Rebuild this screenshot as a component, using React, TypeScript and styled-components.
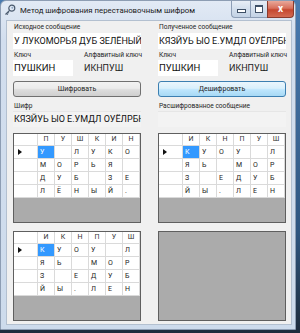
import styled, { createGlobalStyle, css } from "styled-components";

const GlobalStyle = createGlobalStyle`
	html, body {
		margin: 0;
		padding: 0;
	}
	body {
		width: 300px;
		height: 333px;
		overflow: hidden;
		background: linear-gradient(to bottom, #4a7bb0 0%, #2f5680 70%, #1e2c3c 100%);
		font-family: Roboto, "Liberation Sans", Arial, sans-serif;
	}
`;

const encryptRows = [
	["У", "", "Л", "У", "К", "О"],
	["М", "О", "Р", "Ь", "Я", ""],
	["Д", "У", "Б", "", "З", "Е"],
	["Л", "Ё", "Н", "Ы", "Й", "."],
];

const sortedRows = [
	["К", "У", "О", "У", "", "Л"],
	["Я", "Ь", "", "М", "О", "Р"],
	["З", "", "Е", "Д", "У", "Б"],
	["Й", "Ы", ".", "Л", "Е", "Н"],
];

interface GridProps {
	headers?: string[];
	rows?: string[][];
}

const DataGrid = ({ headers, rows }: GridProps) => (
	<GridFrame>
		{headers && (
			<GridLine $head>
				<Corner />
				{headers.map((h, i) => (
					<HeadCell key={i}>{h}</HeadCell>
				))}
			</GridLine>
		)}
		{rows?.map((row, ri) => (
			<GridLine key={ri}>
				<RowHead>{ri === 0 && <Arrow />}</RowHead>
				{row.map((c, ci) => (
					<Cell key={ci} $selected={ri === 0 && ci === 0}>
						{c}
					</Cell>
				))}
			</GridLine>
		))}
	</GridFrame>
);

const KeyIcon = () => (
	<svg width="12" height="12" viewBox="0 0 12 12">
		<circle cx="7.8" cy="4.2" r="3" fill="none" stroke="#4a5a6e" strokeWidth="1.2" />
		<circle cx="8.3" cy="3.7" r="1" fill="#8fa6c2" />
		<path d="M5.6 6.4 L1.5 10.5 M2.6 9.4 L3.8 10.6 M3.8 8.2 L4.8 9.2" stroke="#4a5a6e" strokeWidth="1.2" fill="none" />
	</svg>
);

const App = () => {
	return (
		<>
			<GlobalStyle />
			<Window>
				<TitleBar>
					<KeyIcon />
					<Title>Метод шифрования перестановочным шифром</Title>
					<Captions>
						<CapButton>
							<MinGlyph />
						</CapButton>
						<CapButton $narrow>
							<MaxGlyph />
						</CapButton>
						<CloseButton>x</CloseButton>
					</Captions>
				</TitleBar>
				<Client>
					<Columns>
						<Column>
							<Label>Исходное сообщение</Label>
							<TextBox>У ЛУКОМОРЬЯ ДУБ ЗЕЛЁНЫЙ</TextBox>
							<KeyRow>
								<KeyCol>
									<Label>Ключ</Label>
									<KeyInput>ПУШКИН</KeyInput>
								</KeyCol>
								<KeyCol>
									<Label>Алфавитный ключ</Label>
									<KeyValue>ИКНПУШ</KeyValue>
								</KeyCol>
							</KeyRow>
							<Button>Шифровать</Button>
							<Label $top={4}>Шифр</Label>
							<ReadBox>КЯЗЙУЬ ЫО Е.УМДЛ ОУЁЛРБН</ReadBox>
							<DataGrid headers={["П", "У", "Ш", "К", "И", "Н"]} rows={encryptRows} />
							<DataGrid headers={["И", "К", "Н", "П", "У", "Ш"]} rows={sortedRows} />
						</Column>
						<Column>
							<Label>Полученное сообщение</Label>
							<TextBox>КЯЗЙУЬ ЫО Е.УМДЛ ОУЁЛРБН</TextBox>
							<KeyRow>
								<KeyCol>
									<Label>Ключ</Label>
									<KeyInput>ПУШКИН</KeyInput>
								</KeyCol>
								<KeyCol>
									<Label>Алфавитный ключ</Label>
									<KeyValue>ИКНПУШ</KeyValue>
								</KeyCol>
							</KeyRow>
							<Button $hot>Дешифровать</Button>
							<Label $top={4}>Расшифрованное сообщение</Label>
							<ReadBox />
							<DataGrid headers={["И", "К", "Н", "П", "У", "Ш"]} rows={sortedRows} />
							<DataGrid />
						</Column>
					</Columns>
				</Client>
			</Window>
		</>
	);
};

const Window = styled.div`
	width: 296px;
	height: 330px;
	box-sizing: border-box;
	display: flex;
	flex-direction: column;
	border: 1px solid #8d9db3;
	border-radius: 6px 6px 0 0;
	background: linear-gradient(to bottom, #e2eaf5 0%, #d2deee 12%, #cddbec 100%);
`;

const TitleBar = styled.div`
	height: 19px;
	display: flex;
	align-items: flex-start;
	padding-left: 3px;

	svg {
		margin-top: 3px;
	}
`;

const Title = styled.div`
	margin-left: 4px;
	margin-top: 4px;
	font-size: 7.8px;
	line-height: 11px;
	color: #1a1a1a;
	white-space: nowrap;
`;

const Captions = styled.div`
	margin-left: auto;
	margin-right: 1px;
	display: flex;
`;

const CapButton = styled.div<{ $narrow?: boolean }>`
	width: ${({ $narrow }) => ($narrow ? 17 : 19)}px;
	height: 17px;
	box-sizing: border-box;
	display: flex;
	align-items: center;
	justify-content: center;
	border: 1px solid #8c9db5;
	border-top: none;
	border-right: none;
	border-radius: ${({ $narrow }) => ($narrow ? "0" : "0 0 0 4px")};
	background: linear-gradient(to bottom, #e8eef6 0%, #d3dfed 50%, #c3d2e5 100%);
`;

const MinGlyph = styled.div`
	width: 7px;
	height: 2px;
	margin-top: 4px;
	background: #fff;
	border: 1px solid #3d4f66;
`;

const MaxGlyph = styled.div`
	width: 6px;
	height: 5px;
	border: 1px solid #3d4f66;
	border-top-width: 2px;
	background: #fff;
`;

const CloseButton = styled.div`
	width: 27px;
	height: 17px;
	box-sizing: border-box;
	border: 1px solid #8a3a2c;
	border-top: none;
	border-radius: 0 0 4px 0;
	background: linear-gradient(to bottom, #e9a899 0%, #d8705c 45%, #c5472f 55%, #d36a52 100%);
	color: #fff;
	font-size: 10px;
	font-weight: bold;
	line-height: 15px;
	text-align: center;
`;

const Client = styled.div`
	flex: 1;
	margin: 0 3px 4px 5px;
	padding: 1px 6px 0 6px;
	background: #f0f0f0;
	border: 1px solid #b3c0d0;
`;

const Columns = styled.div`
	display: grid;
	grid-template-columns: 128px 128px;
	column-gap: 17px;
`;

const Column = styled.div`
	display: flex;
	flex-direction: column;
`;

const Label = styled.div<{ $top?: number }>`
	margin-top: ${({ $top }) => $top ?? 0}px;
	font-size: 6.6px;
	line-height: 10px;
	height: 10px;
	padding-left: 1px;
	color: #1e1e1e;
	white-space: nowrap;
`;

const fieldText = css`
	height: 16px;
	font-size: 9px;
	line-height: 16px;
	padding-left: 1px;
	color: #111;
	white-space: nowrap;
	overflow: hidden;
`;

const TextBox = styled.div`
	${fieldText}
	margin-top: 1px;
	background: #fff;
`;

const KeyRow = styled.div`
	display: grid;
	grid-template-columns: 60px 1fr;
	column-gap: 10px;
	margin-top: 1px;
`;

const KeyCol = styled.div`
	display: flex;
	flex-direction: column;
`;

const KeyInput = styled.div`
	${fieldText}
	font-size: 9.5px;
	background: #fff;
`;

const KeyValue = styled.div`
	${fieldText}
	font-size: 9px;
	color: #1a1a1a;
`;

const Button = styled.div<{ $hot?: boolean }>`
	margin-top: 5px;
	height: 16px;
	box-sizing: border-box;
	border: 1px solid ${({ $hot }) => ($hot ? "#3c7fb1" : "#707070")};
	border-radius: 3px;
	background: ${({ $hot }) =>
		$hot
			? "linear-gradient(to bottom, #eaf6fd 0%, #d9f0fc 45%, #bee6fd 55%, #a7d9f5 100%)"
			: "linear-gradient(to bottom, #f2f2f2 0%, #ebebeb 45%, #dddddd 55%, #cfcfcf 100%)"};
	font-size: 7px;
	line-height: 14px;
	text-align: center;
	color: #1e1e1e;
`;

const ReadBox = styled.div`
	${fieldText}
	box-sizing: border-box;
	background: #f3f3f3;
	border-top: 1px solid #e6e6e6;
	line-height: 15px;
`;

const GridFrame = styled.div`
	margin-top: 6px;
	height: 90px;
	box-sizing: border-box;
	border: 1px solid #5f5f5f;
	background: #ababab;
	overflow: hidden;

	& + & {
		margin-top: 8px;
	}
`;

const GridLine = styled.div<{ $head?: boolean }>`
	display: grid;
	grid-template-columns: 24px repeat(6, 17px);
	height: ${({ $head }) => ($head ? 12 : 13)}px;
`;

const cellBase = css`
	box-sizing: border-box;
	background: #fff;
	border-right: 1px solid #dadada;
	border-bottom: 1px solid #dadada;
	font-size: 7px;
	color: #222;
	white-space: nowrap;
	overflow: hidden;
`;

const Corner = styled.div`
	${cellBase}
`;

const HeadCell = styled.div`
	${cellBase}
	text-align: center;
	line-height: 11px;
	color: #333;
`;

const RowHead = styled.div`
	${cellBase}
	display: flex;
	align-items: center;
	padding-left: 4px;
`;

const Arrow = styled.div`
	width: 0;
	height: 0;
	border-left: 4px solid #111;
	border-top: 3px solid transparent;
	border-bottom: 3px solid transparent;
`;

const Cell = styled.div<{ $selected?: boolean }>`
	${cellBase}
	padding-left: 2px;
	line-height: 12px;
	${({ $selected }) =>
		$selected &&
		css`
			background: #3399ff;
			color: #fff;
		`}
`;

export default App;
